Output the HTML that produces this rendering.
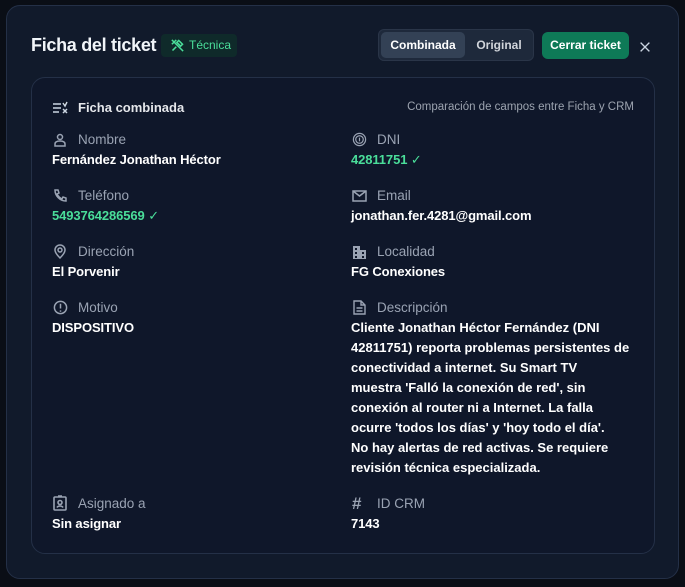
<!DOCTYPE html>
<html><head><meta charset="utf-8"><style>
*{margin:0;padding:0;box-sizing:border-box}
body{width:685px;height:587px;background:#0a0e16;font-family:"Liberation Sans",sans-serif;position:relative;overflow:hidden}
.modal{position:absolute;left:6px;top:5px;width:673px;height:574px;background:#111a2b;border:1px solid #243047;border-radius:14px}
.title{position:absolute;left:31px;top:35px;color:#f1f5f9;font-size:18px;font-weight:bold;letter-spacing:-0.3px}
.badge{position:absolute;left:161px;top:34px;height:23px;width:76px;background:#0f2a2a;border-radius:4px;color:#4ade9a;font-size:12px;line-height:23px;padding-left:28px}
.seg{position:absolute;left:378px;top:29px;width:156px;height:32px;background:#1e293b;border:1px solid #2a3548;border-radius:6px}
.seg .a{position:absolute;left:2px;top:2px;width:84px;height:26px;background:#334155;border-radius:5px;color:#fff;font-size:12px;font-weight:bold;text-align:center;line-height:26px}
.seg .b{position:absolute;left:90px;top:2px;width:60px;height:26px;color:#d1d5db;font-size:12px;font-weight:bold;text-align:center;line-height:26px}
.btn{position:absolute;left:542px;top:32px;width:87px;height:27px;background:#0e7a57;border-radius:6px;color:#fff;font-size:12px;font-weight:bold;text-align:center;line-height:27px}
.x{position:absolute;left:638px;top:40px}
.card{position:absolute;left:31px;top:77px;width:624px;height:477px;background:#0f172a;border:1px solid #243047;border-radius:14px}
.h{position:absolute;color:#e5e7eb;font-size:13px;font-weight:bold}
.sub{position:absolute;right:51px;top:101px;color:#9ca3af;font-size:11.5px}
.lab{position:absolute;color:#9aa3b3;font-size:13.5px}
.val{position:absolute;color:#fff;font-size:13px;font-weight:bold;line-height:20px;letter-spacing:-0.1px;white-space:nowrap}
.g{color:#4ade9a}
svg.i{position:absolute}
</style></head><body>
<div class="modal"></div>
<div class="title">Ficha del ticket</div>
<div class="badge"><svg style="position:absolute;left:9px;top:4px" width="15" height="15" viewBox="0 0 24 24" fill="none" stroke="#4ade9a" stroke-width="2.5"><path d="M3 3l18 18M14 4l6 6-3 3-6-6zM4 20l6-6M3 10l7-7"/></svg>Técnica</div>
<div class="seg"><div class="a">Combinada</div><div class="b">Original</div></div>
<div class="btn">Cerrar ticket</div>
<svg class="x" width="14" height="14" viewBox="0 0 16 16" stroke="#cbd5e1" stroke-width="1.5"><path d="M3 3l10 10M13 3L3 13"/></svg>
<div class="card"></div>
<svg class="i" style="left:52px;top:101px" width="16" height="14" viewBox="0 0 16 14" stroke="#cbd5e1" stroke-width="1.5"><path d="M1 3h8M1 7h8M1 11h6M11 8l4 4M15 8l-4 4M11 2l2 3 2-4"/></svg>
<div class="h" style="left:78px;top:100px">Ficha combinada</div>
<div class="sub">Comparación de campos entre Ficha y CRM</div>

<svg class="i" style="left:53px;top:133px" width="14" height="14" viewBox="0 0 14 14" fill="none" stroke="#9aa3b3" stroke-width="1.5"><circle cx="7" cy="4" r="2.5"/><path d="M2 13v-2c0-2 2-3 5-3s5 1 5 3v2z"/></svg>
<div class="lab" style="left:78px;top:132px">Nombre</div>
<div class="val" style="left:52px;top:150px">Fernández Jonathan Héctor</div>
<svg class="i" style="left:352px;top:132px" width="15" height="15" viewBox="0 0 16 16" fill="none" stroke="#9aa3b3" stroke-width="1.3"><circle cx="8" cy="8" r="6.5"/><circle cx="8" cy="8" r="4"/><path d="M8 6v4"/></svg>
<div class="lab" style="left:377px;top:132px">DNI</div>
<div class="val g" style="left:351px;top:150px">42811751 <span style="font-weight:normal">✓</span></div>

<svg class="i" style="left:53px;top:189px" width="14" height="14" viewBox="0 0 14 14" fill="none" stroke="#9aa3b3" stroke-width="1.5"><path d="M2 1h3l1 3-2 1c1 2 3 4 5 5l1-2 3 1v3c-6 0-11-5-11-11z"/></svg>
<div class="lab" style="left:78px;top:188px">Teléfono</div>
<div class="val g" style="left:52px;top:206px">5493764286569 <span style="font-weight:normal">✓</span></div>
<svg class="i" style="left:352px;top:190px" width="15" height="12" viewBox="0 0 15 12" fill="none" stroke="#9aa3b3" stroke-width="1.5"><rect x="1" y="1" width="13" height="10"/><path d="M1 1l6.5 5 6.5-5"/></svg>
<div class="lab" style="left:377px;top:188px">Email</div>
<div class="val" style="left:351px;top:206px">jonathan.fer.4281@gmail.com</div>

<svg class="i" style="left:54px;top:244px" width="12" height="15" viewBox="0 0 12 15" fill="none" stroke="#9aa3b3" stroke-width="1.5"><path d="M6 14C2 10 1 8 1 6a5 5 0 0110 0c0 2-1 4-5 8z"/><circle cx="6" cy="6" r="2"/></svg>
<div class="lab" style="left:78px;top:244px">Dirección</div>
<div class="val" style="left:52px;top:262px">El Porvenir</div>
<svg class="i" style="left:352px;top:245px" width="15" height="14" viewBox="0 0 15 14" fill="#9aa3b3"><path d="M1 14V1h7v4h6v9zM3 3v2h2V3zm0 4v2h2V7zm0 4v2h2v-2zm7-4v2h2V7zm0 4v2h2v-2z"/></svg>
<div class="lab" style="left:377px;top:244px">Localidad</div>
<div class="val" style="left:351px;top:262px">FG Conexiones</div>

<svg class="i" style="left:53px;top:300px" width="15" height="15" viewBox="0 0 16 16" fill="none" stroke="#9aa3b3" stroke-width="1.6"><circle cx="8" cy="8" r="6.5"/><path d="M8 4v5M8 11v1.5"/></svg>
<div class="lab" style="left:78px;top:300px">Motivo</div>
<div class="val" style="left:52px;top:318px">DISPOSITIVO</div>
<svg class="i" style="left:353px;top:300px" width="13" height="15" viewBox="0 0 13 15" fill="none" stroke="#9aa3b3" stroke-width="1.4"><path d="M1 1h7l4 4v9H1z M8 1v4h4M3.5 8h6M3.5 11h6"/></svg>
<div class="lab" style="left:377px;top:300px">Descripción</div>
<div class="val" style="left:351px;top:318px;letter-spacing:0">Cliente Jonathan Héctor Fernández (DNI<br>42811751) reporta problemas persistentes de<br>conectividad a internet. Su Smart TV<br>muestra 'Falló la conexión de red', sin<br>conexión al router ni a Internet. La falla<br>ocurre 'todos los días' y 'hoy todo el día'.<br>No hay alertas de red activas. Se requiere<br>revisión técnica especializada.</div>

<svg class="i" style="left:53px;top:495px" width="14" height="16" viewBox="0 0 14 16" fill="none" stroke="#9aa3b3" stroke-width="1.6"><rect x="1" y="2" width="12" height="13" rx="1"/><circle cx="7" cy="7.5" r="2"/><path d="M4 12.5c1-2 5-2 6 0M5 1h4"/></svg>
<div class="lab" style="left:78px;top:496px">Asignado a</div>
<div class="val" style="left:52px;top:514px">Sin asignar</div>
<div class="lab" style="left:352px;top:494px;font-size:17px;font-weight:bold;color:#9aa3b3">#</div>
<div class="lab" style="left:377px;top:496px">ID CRM</div>
<div class="val" style="left:351px;top:514px">7143</div>
</body></html>
